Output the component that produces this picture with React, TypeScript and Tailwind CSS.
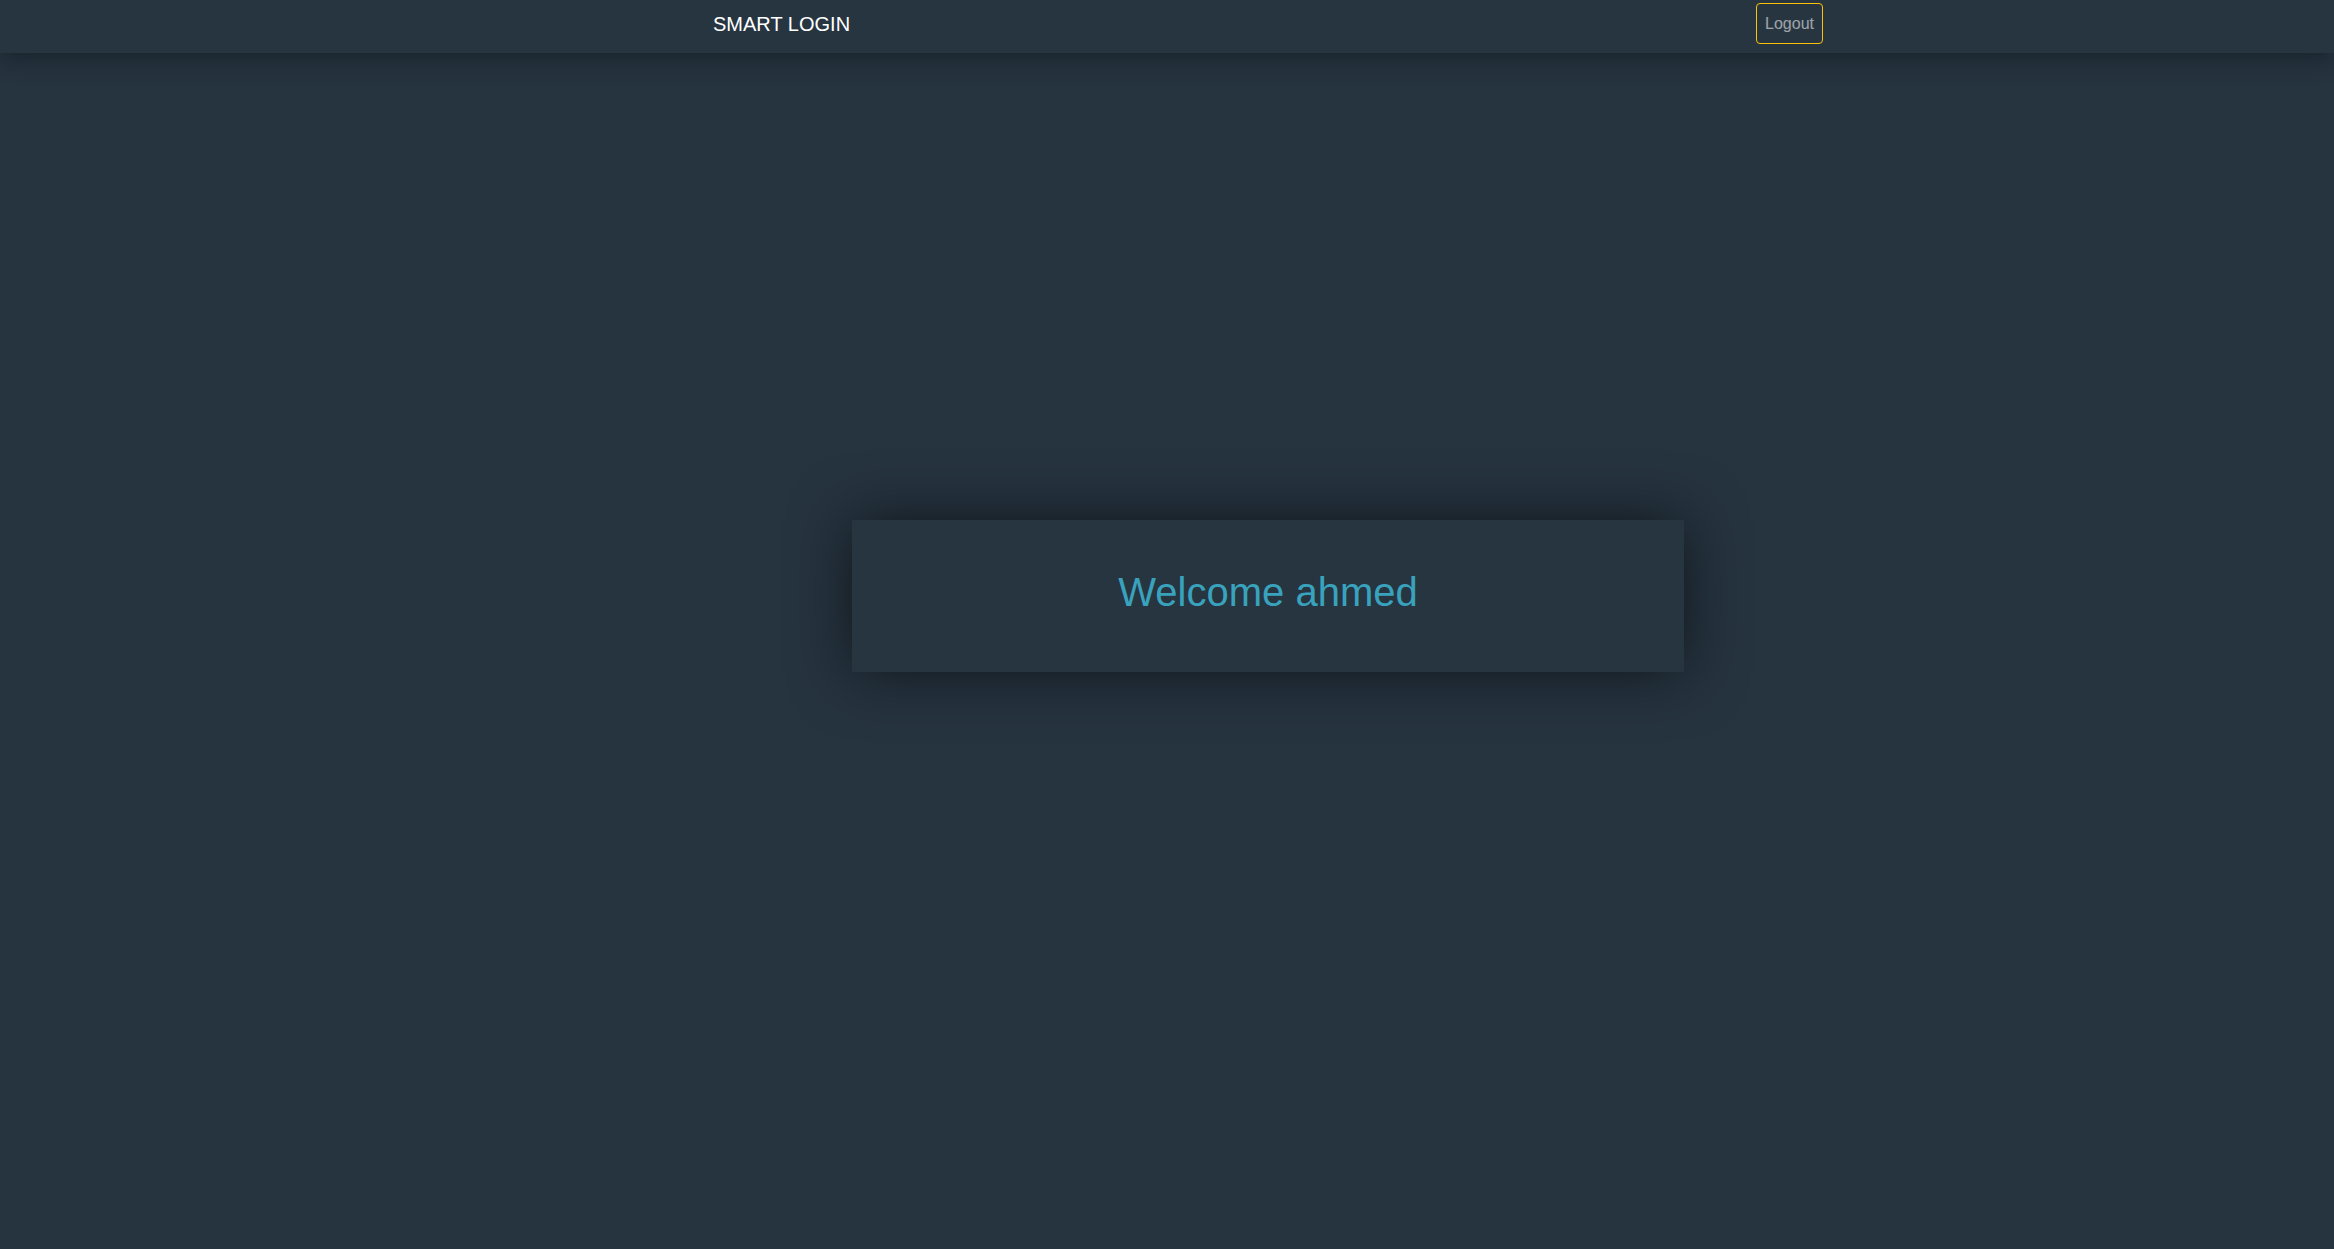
export default function App() {
  return (
    <div className="min-h-screen bg-[#263440] font-['Liberation_Sans',Arial,sans-serif]">
      <nav className="h-[53px] bg-[#273541] shadow-[0_6px_24px_rgba(0,0,0,0.35)] relative">
        <div className="ml-[698px] w-[1140px] px-[15px] h-[47px] flex items-center justify-between">
          <span className="text-[20px] leading-[30px] text-white">SMART LOGIN</span>
          <button className="h-[41px] w-[67px] flex items-center justify-center border border-[#ffc107] rounded-[4px] text-[16px] leading-6 text-white/55">
            Logout
          </button>
        </div>
      </nav>
      <main className="ml-[698px] w-[1140px] px-[15px] pt-[467px]">
        <div className="mx-auto w-[832px] h-[152px] bg-[#273541] shadow-[0_0_60px_rgba(0,0,0,0.6)] pt-[48px] text-center">
          <h1 className="text-[40px] leading-[48px] text-[#39a2bd]">Welcome ahmed</h1>
        </div>
      </main>
    </div>
  );
}
